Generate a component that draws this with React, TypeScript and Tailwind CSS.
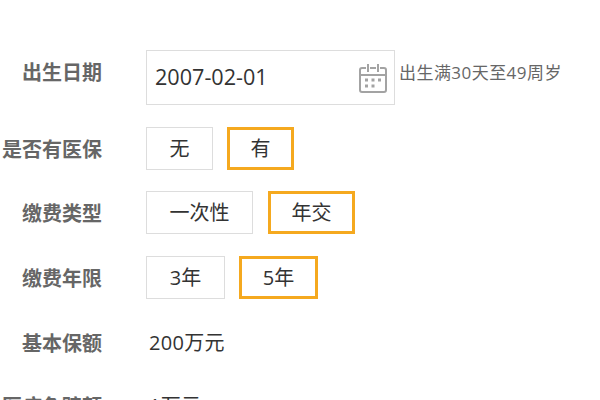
import type { ReactNode } from "react";

const font = "font-['Open_Sans','Noto_Sans_CJK_SC',sans-serif]";

function Row({ label, className, gap, children }: { label: string; className: string; gap?: string; children: ReactNode }) {
  return (
    <div className={`flex ${className}`}>
      <div className="h-[43px] w-[102px] shrink-0 text-right text-[20px] leading-[45px] font-bold whitespace-nowrap text-[#666666]">
        {label}
      </div>
      <div className={`ml-[44px] flex ${gap ?? "gap-[14px]"}`}>{children}</div>
    </div>
  );
}

function Option({ text, active, width }: { text: string; active?: boolean; width: string }) {
  return (
    <div
      className={`flex h-[43px] items-center justify-center pt-[1px] text-[20px] text-[#333333] ${width} ${
        active ? "border-[3px] border-[#f5a91f]" : "border border-[#dddddd]"
      }`}
    >
      {text}
    </div>
  );
}

function CalendarIcon() {
  return (
    <svg width="28" height="30" viewBox="0 0 28 30" fill="none" stroke="#a3a3a3" strokeWidth="2">
      <path d="M7 5H3a2 2 0 0 0-2 2v20a2 2 0 0 0 2 2h22a2 2 0 0 0 2-2V7a2 2 0 0 0-2-2h-4M11 5h6M1 12h26M9 1v8M19 1v8" />
      <path d="M6 17h3M12.500 17h3M19 17h3M6 23h3M12.500 23h3" strokeWidth="3" />
    </svg>
  );
}

export default function App() {
  return (
    <div className={`h-[400px] w-[600px] overflow-hidden bg-white ${font}`}>
      <div className="pt-[50px]">
        <div className="flex">
          <div className="w-[102px] shrink-0 text-right text-[20px] leading-[45px] font-bold text-[#666666]">
            出生日期
          </div>
          <div className="ml-[44px] flex h-[55px] w-[249px] items-center justify-between border border-[#dddddd] pr-[7px] pl-[8px]">
            <span className="text-[21.6px] text-[#333333]">2007-02-01</span>
            <CalendarIcon />
          </div>
          <span className="ml-[4px] pt-[11px] text-[17px] leading-[24px] tracking-[0.45px] text-[#666666]">
            出生满30天至49周岁
          </span>
        </div>
        <Row label="是否有医保" className="mt-[22px]">
          <Option text="无" width="w-[67px]" />
          <Option text="有" active width="w-[67px]" />
        </Row>
        <Row label="缴费类型" className="mt-[21px]" gap="gap-[15px]">
          <Option text="一次性" width="w-[107px]" />
          <Option text="年交" active width="w-[87px]" />
        </Row>
        <Row label="缴费年限" className="mt-[22px]">
          <Option text="3年" width="w-[79px]" />
          <Option text="5年" active width="w-[79px]" />
        </Row>
        <Row label="基本保额" className="mt-[22px]">
          <div className="pl-[3px] text-[20px] leading-[43px] tracking-[0.3px] text-[#333333]">200万元</div>
        </Row>
        <Row label="医疗免赔额" className="mt-[20px]">
          <div className="pl-[3px] text-[20px] leading-[43px] tracking-[0.3px] text-[#333333]">1万元</div>
        </Row>
      </div>
    </div>
  );
}
